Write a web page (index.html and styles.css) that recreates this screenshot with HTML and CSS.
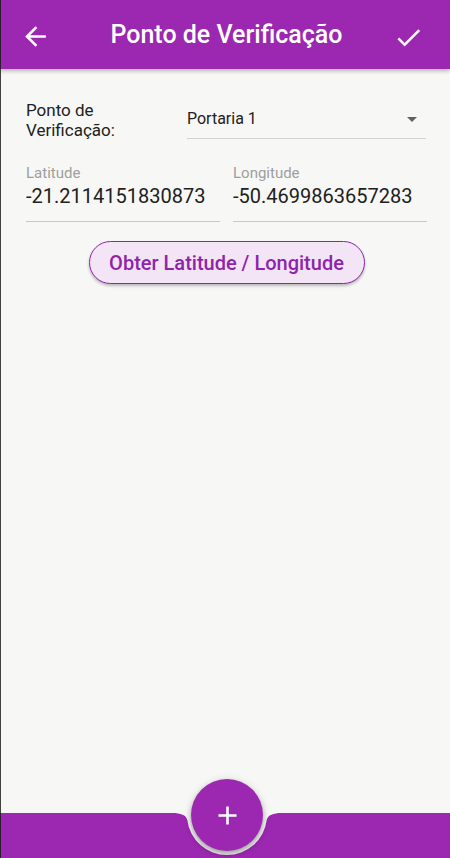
FILE: index.html
```html
<!DOCTYPE html>
<html lang="pt">
<head>
<meta charset="utf-8">
<title>Ponto de Verificação</title>
<link rel="stylesheet" href="styles.css">
</head>
<body>
<div class="screen">
  <header class="appbar">
    <button class="icon-btn back" aria-label="Voltar">
      <svg viewBox="0 0 24 24"><path d="M20 11H7.83l5.59-5.59L12 4l-8 8 8 8 1.41-1.41L7.83 13H20v-2z"/></svg>
    </button>
    <h1 class="title">Ponto de Verificação</h1>
    <button class="icon-btn check" aria-label="Salvar">
      <svg viewBox="0 0 24 24"><path d="M9 16.17L4.83 12l-1.42 1.41L9 19 21 7l-1.41-1.41z"/></svg>
    </button>
  </header>

  <main class="content">
    <div class="row-point">
      <div class="point-label">Ponto de<br>Verificação:</div>
      <div class="dropdown">
        <span class="dropdown-value">Portaria 1</span>
        <span class="caret"></span>
      </div>
    </div>

    <div class="row-coords">
      <div class="field">
        <span class="field-label">Latitude</span>
        <span class="field-value">-21.2114151830873</span>
      </div>
      <div class="field">
        <span class="field-label">Longitude</span>
        <span class="field-value">-50.4699863657283</span>
      </div>
    </div>

    <button class="btn-locate">Obter Latitude / Longitude</button>
  </main>

  <footer class="bottombar">
    <svg class="bar-shape" viewBox="0 0 450 45" width="450" height="45" preserveAspectRatio="none">
      <path d="M0 0 H172 C181 0 186 2 187.3 7 A40 40 0 0 0 266.7 7 C268 2 273 0 282 0 H450 V45 H0 Z"/>
    </svg>
    <button class="fab" aria-label="Adicionar">
      <svg viewBox="0 0 24 24"><path d="M19 13h-6v6h-2v-6H5v-2h6V5h2v6h6v2z"/></svg>
    </button>
  </footer>
</div>
</body>
</html>
```

FILE: styles.css
```css
* {
  box-sizing: border-box;
}

html, body {
  margin: 0;
  padding: 0;
}

body {
  font-family: Roboto, "Noto Sans", "Liberation Sans", sans-serif;
  background: #f7f8f6;
  color: #212121;
}

.screen {
  position: relative;
  width: 450px;
  height: 858px;
  display: flex;
  flex-direction: column;
  overflow: hidden;
  background: #f7f8f6;
}

.screen::before {
  content: "";
  position: absolute;
  left: 0;
  top: 0;
  width: 1px;
  height: 100%;
  background: rgba(25, 25, 25, 0.82);
  z-index: 5;
}

/* App bar */
.appbar {
  position: relative;
  z-index: 2;
  height: 69px;
  flex-shrink: 0;
  display: flex;
  align-items: center;
  padding: 0 26px 0 20px;
  background: #9c27b0;
  box-shadow: 0 2px 4px rgba(0, 0, 0, 0.28);
}

.icon-btn {
  width: 31px;
  height: 31px;
  padding: 0;
  border: 0;
  background: none;
  display: flex;
  flex-shrink: 0;
}

.icon-btn svg {
  width: 31px;
  height: 31px;
  fill: #ffffff;
}

.back {
  margin-top: 3px;
}

.check {
  margin-top: 6px;
}

.title {
  flex: 1;
  margin: 0;
  padding-left: 9px;
  text-align: center;
  color: #ffffff;
  font-size: 25px;
  font-weight: 500;
  line-height: 30px;
}

/* Content */
.content {
  flex: 1;
  display: flex;
  flex-direction: column;
  padding: 31px 23px 0 26px;
}

.row-point {
  display: flex;
  align-items: flex-start;
}

.point-label {
  width: 161px;
  flex-shrink: 0;
  font-size: 17px;
  line-height: 20px;
  color: #212121;
}

.dropdown {
  flex: 1;
  display: flex;
  align-items: center;
  margin-right: 1px;
  padding: 7px 9px 7px 0;
  border-bottom: 1px solid #d2d2d2;
}

.dropdown-value {
  flex: 1;
  font-size: 16px;
  line-height: 24px;
  color: #212121;
}

.caret {
  width: 0;
  height: 0;
  margin-top: 1px;
  border-left: 5px solid transparent;
  border-right: 5px solid transparent;
  border-top: 5px solid #616161;
}

.row-coords {
  display: flex;
  gap: 13px;
  margin-top: 24px;
}

.field {
  flex: 1;
  display: flex;
  flex-direction: column;
  padding-bottom: 13px;
  border-bottom: 1px solid #c8c8c8;
}

.field-label {
  font-size: 15px;
  line-height: 18px;
  color: #9e9e9e;
}

.field-value {
  margin-top: 2px;
  font-size: 20px;
  line-height: 24px;
  color: #212121;
}

.btn-locate {
  align-self: center;
  margin-top: 19px;
  width: 276px;
  height: 43px;
  padding: 0;
  border: 1px solid #8e24aa;
  border-radius: 22px;
  background: #f3e5f5;
  color: #8e24aa;
  font-family: Roboto, "Noto Sans", "Liberation Sans", sans-serif;
  font-size: 20px;
  font-weight: 500;
  line-height: 24px;
  box-shadow: 0 2px 3px rgba(0, 0, 0, 0.25);
}

/* Bottom bar */
.bottombar {
  position: relative;
  height: 45px;
  flex-shrink: 0;
}

.bar-shape {
  display: block;
  width: 450px;
  height: 45px;
  fill: #9c27b0;
}

.fab {
  position: absolute;
  left: 191px;
  top: -34px;
  width: 72px;
  height: 72px;
  padding: 0;
  border: 0;
  border-radius: 50%;
  background: #9c27b0;
  display: flex;
  align-items: center;
  justify-content: center;
  box-shadow: 0 3px 5px rgba(0, 0, 0, 0.3), 0 1px 10px rgba(0, 0, 0, 0.12);
}

.fab svg {
  width: 31px;
  height: 31px;
  fill: #ffffff;
}
```
